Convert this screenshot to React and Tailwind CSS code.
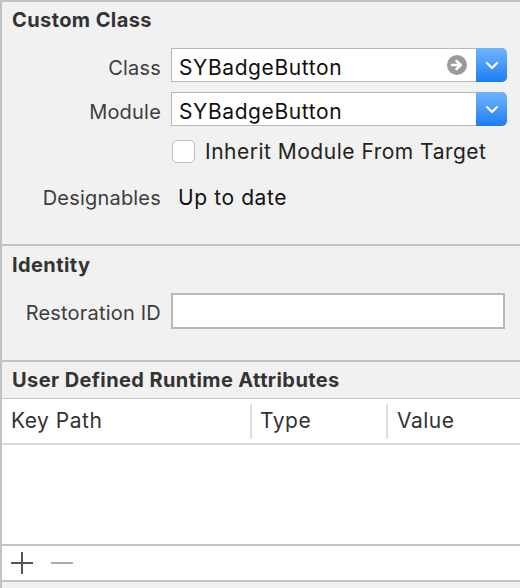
import React from 'react';

const font = "font-['Inter','Helvetica_Neue','Liberation_Sans',sans-serif]";

const Chevron = () => (
  <svg width="14" height="9" viewBox="0 0 14 9" fill="none">
    <path d="M2 2l5 5 5-5" stroke="white" strokeWidth="2.2" strokeLinecap="round" strokeLinejoin="round" />
  </svg>
);

const ArrowCircle = () => (
  <svg width="20" height="20" viewBox="0 0 20 20">
    <circle cx="10" cy="10" r="10" fill="#9b9b9b" />
    <path d="M5 10h8M9.5 5.8L13.7 10 9.5 14.2" stroke="white" strokeWidth="2.6" fill="none" strokeLinecap="round" strokeLinejoin="round" />
  </svg>
);

const ComboField = ({ value, arrow }) => (
  <div className="flex w-[336px] h-[34px]">
    <div className="flex-1 flex items-center bg-white border border-r-0 border-[#b9b9b9] pl-[7px] pr-[9px]">
      <span className="flex-1 pt-[6px] leading-[24px] text-[21px] tracking-[0.6px] text-[#111]">{value}</span>
      {arrow && <ArrowCircle />}
    </div>
    <div className="w-[31px] rounded-r-[5px] bg-gradient-to-b from-[#6db4fb] to-[#1a7cf5] flex items-center justify-center">
      <Chevron />
    </div>
  </div>
);

const Row = ({ label, children, className = '', labelClass = '' }) => (
  <div className={`flex items-center ${className}`}>
    <div className={`w-[159px] text-right leading-[24px] text-[20px] tracking-[0.2px] text-[#3d3d3d] ${labelClass}`}>{label}</div>
    <div className="ml-[10px]">{children}</div>
  </div>
);

const Title = ({ children, className = '' }) => (
  <div className={`pl-[10px] h-[24px] leading-[24px] text-[20px] tracking-[0.4px] font-bold text-[#333] ${className}`}>
    {children}
  </div>
);

export default function App() {
  return (
    <div className={`w-[520px] h-[588px] bg-[#f1f1f1] border-l-2 border-t-2 border-[#c2c2c2] overflow-hidden flex flex-col leading-[1.2] ${font}`}>
      {/* Custom Class */}
      <div className="h-[242px] flex flex-col">
        <Title className="mt-[6px]">Custom Class</Title>
        <Row label="Class" labelClass="pt-[6px]" className="mt-[16px]">
          <ComboField value="SYBadgeButton" arrow />
        </Row>
        <Row label="Module" labelClass="pt-[6px]" className="mt-[10px]">
          <ComboField value="SYBadgeButton" />
        </Row>
        <div className="flex items-center mt-[14px] ml-[170px] h-[23px]">
          <div className="w-[23px] h-[23px] rounded-[5px] bg-white border border-[#bdbdbd]" />
          <span className="ml-[10px] leading-[24px] text-[21px] tracking-[0.5px] text-[#222]">Inherit Module From Target</span>
        </div>
        <Row label="Designables" className="mt-[23px] h-[24px]">
          <span className="pl-[7px] leading-[24px] text-[21px] tracking-[0.6px] text-[#111]">Up to date</span>
        </Row>
      </div>
      <div className="h-[2px] bg-[#c2c2c2]" />

      {/* Identity */}
      <div className="h-[114px] flex flex-col">
        <Title className="mt-[7px]">Identity</Title>
        <Row label="Restoration ID" labelClass="pt-[4px]" className="mt-[16px]">
          <div className="w-[334px] h-[36px] bg-white border-2 border-[#b9b9b9]" />
        </Row>
      </div>
      <div className="h-[2px] bg-[#c2c2c2]" />

      {/* User Defined Runtime Attributes */}
      <div className="h-[36px] flex items-center">
        <Title>User Defined Runtime Attributes</Title>
      </div>
      <div className="h-[1px] bg-[#c8c8c8]" />
      <div className="bg-white h-[145px] flex flex-col">
        <div className="h-[46px] flex items-center border-b-2 border-[#dcdcdc] text-[21px] tracking-[0.5px] text-[#333]">
          <div className="w-[248px] pl-[9px]">Key Path</div>
          <div className="w-[2px] h-[35px] bg-[#dedede]" />
          <div className="w-[134px] pl-[8px]">Type</div>
          <div className="w-[2px] h-[35px] bg-[#dedede]" />
          <div className="pl-[9px]">Value</div>
        </div>
      </div>
      <div className="h-[2px] bg-[#c2c2c2]" />
      <div className="h-[34px] bg-white flex items-center pl-[9px]">
        <svg width="22" height="22" viewBox="0 0 22 22">
          <path d="M0 11h22M11 0v22" stroke="#555" strokeWidth="2" />
        </svg>
        <svg width="22" height="22" viewBox="0 0 22 22" className="ml-[18px]">
          <path d="M0 11h22" stroke="#ababab" strokeWidth="2" />
        </svg>
      </div>
      <div className="h-[2px] bg-[#c2c2c2]" />
    </div>
  );
}
